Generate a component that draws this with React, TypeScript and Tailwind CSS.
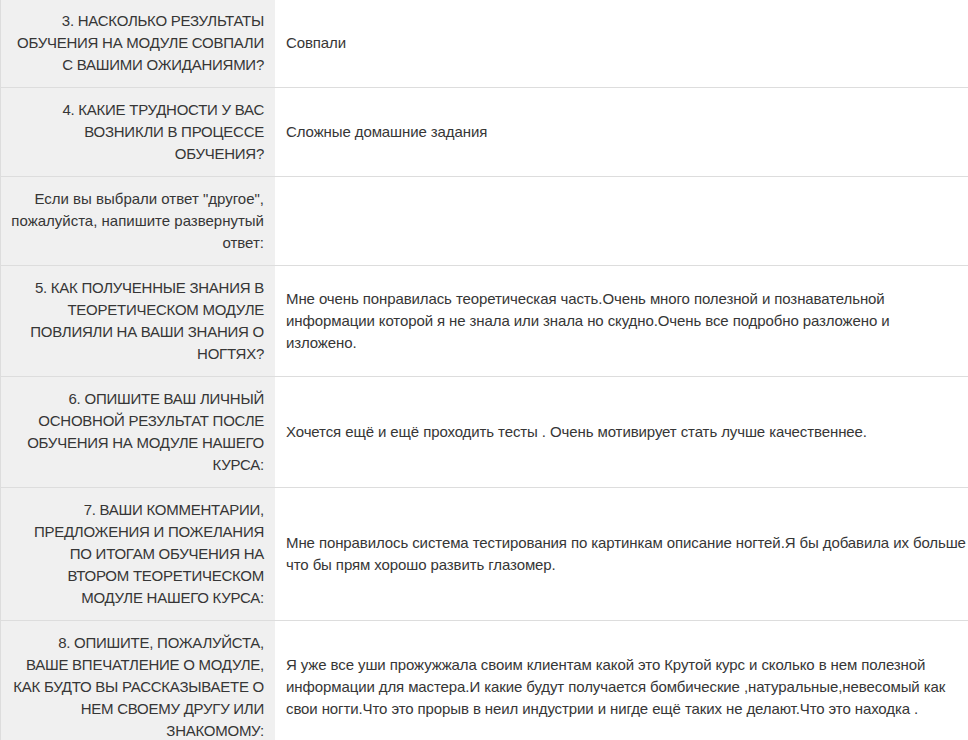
import React from "react";

const rows: { q: string[]; a: string[]; lower?: boolean }[] = [
  {
    q: ["3. НАСКОЛЬКО РЕЗУЛЬТАТЫ", "ОБУЧЕНИЯ НА МОДУЛЕ СОВПАЛИ", "С ВАШИМИ ОЖИДАНИЯМИ?"],
    a: ["Совпали"],
  },
  {
    q: ["4. КАКИЕ ТРУДНОСТИ У ВАС", "ВОЗНИКЛИ В ПРОЦЕССЕ", "ОБУЧЕНИЯ?"],
    a: ["Сложные домашние задания"],
  },
  {
    q: ["Если вы выбрали ответ \"другое\",", "пожалуйста, напишите развернутый", "ответ:"],
    a: [],
    lower: true,
  },
  {
    q: ["5. КАК ПОЛУЧЕННЫЕ ЗНАНИЯ В", "ТЕОРЕТИЧЕСКОМ МОДУЛЕ", "ПОВЛИЯЛИ НА ВАШИ ЗНАНИЯ О", "НОГТЯХ?"],
    a: [
      "Мне очень понравилась теоретическая часть.Очень много полезной и познавательной",
      "информации которой я не знала или знала но скудно.Очень все подробно разложено и",
      "изложено.",
    ],
  },
  {
    q: ["6. ОПИШИТЕ ВАШ ЛИЧНЫЙ", "ОСНОВНОЙ РЕЗУЛЬТАТ ПОСЛЕ", "ОБУЧЕНИЯ НА МОДУЛЕ НАШЕГО", "КУРСА:"],
    a: ["Хочется ещё и ещё проходить тесты . Очень мотивирует стать лучше качественнее."],
  },
  {
    q: [
      "7. ВАШИ КОММЕНТАРИИ,",
      "ПРЕДЛОЖЕНИЯ И ПОЖЕЛАНИЯ",
      "ПО ИТОГАМ ОБУЧЕНИЯ НА",
      "ВТОРОМ ТЕОРЕТИЧЕСКОМ",
      "МОДУЛЕ НАШЕГО КУРСА:",
    ],
    a: [
      "Мне понравилось система тестирования по картинкам описание ногтей.Я бы добавила их больше",
      "что бы прям хорошо развить глазомер.",
    ],
  },
  {
    q: [
      "8. ОПИШИТЕ, ПОЖАЛУЙСТА,",
      "ВАШЕ ВПЕЧАТЛЕНИЕ О МОДУЛЕ,",
      "КАК БУДТО ВЫ РАССКАЗЫВАЕТЕ О",
      "НЕМ СВОЕМУ ДРУГУ ИЛИ",
      "ЗНАКОМОМУ:",
    ],
    a: [
      "Я уже все уши прожужжала своим клиентам какой это Крутой курс и сколько в нем полезной",
      "информации для мастера.И какие будут получается бомбические ,натуральные,невесомый как",
      "свои ногти.Что это прорыв в неил индустрии и нигде ещё таких не делают.Что это находка .",
    ],
  },
];

export default function App() {
  return (
    <div
      className="w-[968px] h-[740px] overflow-hidden bg-white text-[#363636]"
      style={{ fontFamily: '"Liberation Sans", Arial, sans-serif' }}
    >
      <div className="w-[990px] -mt-px border-l border-[#dddddd] text-[15px] leading-[22px]">
        {rows.map((r, i) => (
          <div key={i} className="flex border-b border-[#dddddd]">
            <div
              className={
                r.lower
                  ? "w-[274px] shrink-0 bg-[#f0f0f0] px-[11px] py-[11px] flex flex-col justify-center items-end text-right tracking-[0px]"
                  : "w-[274px] shrink-0 bg-[#f0f0f0] px-[11px] py-[11px] flex flex-col justify-center items-end text-right tracking-[-0.25px]"
              }
            >
              {r.q.map((l, j) => (
                <div key={j} className="whitespace-nowrap">
                  {l}
                </div>
              ))}
            </div>
            <div className="flex-1 min-w-0 px-[11px] py-[11px] flex flex-col justify-center tracking-[-0.1px]">
              {r.a.map((l, j) => (
                <div key={j} className="whitespace-nowrap">
                  {l}
                </div>
              ))}
            </div>
          </div>
        ))}
      </div>
    </div>
  );
}
